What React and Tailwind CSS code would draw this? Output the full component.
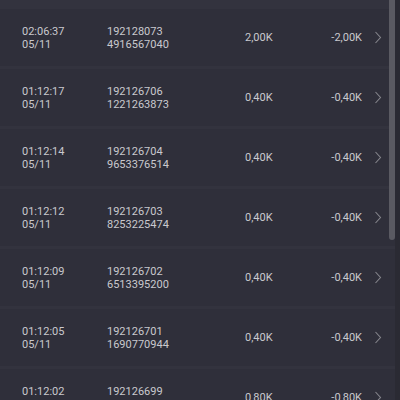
import React from "react";

const rows = [
  ["02:06:37", "05/11", "192128073", "4916567040", "2,00K", "-2,00K"],
  ["01:12:17", "05/11", "192126706", "1221263873", "0,40K", "-0,40K"],
  ["01:12:14", "05/11", "192126704", "9653376514", "0,40K", "-0,40K"],
  ["01:12:12", "05/11", "192126703", "8253225474", "0,40K", "-0,40K"],
  ["01:12:09", "05/11", "192126702", "6513395200", "0,40K", "-0,40K"],
  ["01:12:05", "05/11", "192126701", "1690770944", "0,40K", "-0,40K"],
  ["01:12:02", "05/11", "192126699", "7615401144", "0,80K", "-0,80K"],
];

function Chevron() {
  return (
    <svg width="8" height="13" viewBox="0 0 8 13" className="block">
      <path d="M1.5 1 L6.5 6.5 L1.5 12" fill="none" stroke="#85858c" strokeWidth="1.1" />
    </svg>
  );
}

export default function App() {
  return (
    <div
      className="relative w-[400px] h-[400px] overflow-hidden bg-[#33333e] text-[11px] leading-[13px] text-[#c9c9ce]"
      style={{ fontFamily: "Roboto, 'Noto Sans', sans-serif" }}
    >
      <div className="flex flex-col gap-[3px] pt-[9px]">
        {rows.map((r, i) => (
          <div key={i} className="flex items-center h-[57px] shrink-0 bg-[#2f2f3a] pl-[22px]">
            <div className="w-[85px] flex flex-col">
              <span>{r[0]}</span>
              <span>{r[1]}</span>
            </div>
            <div className="w-[138px] flex flex-col">
              <span>{r[2]}</span>
              <span>{r[3]}</span>
            </div>
            <div className="w-[60px]">{r[4]}</div>
            <div className="w-[57px] text-right">{r[5]}</div>
            <div className="ml-[12px]">
              <Chevron />
            </div>
          </div>
        ))}
      </div>
      <div className="absolute right-0 top-0 h-full w-[5px] bg-[#2a2a33]" />
      <div className="absolute right-[5px] top-0 h-[240px] w-[6px] rounded-b-[3px] bg-[#5a5a62]" />
    </div>
  );
}
